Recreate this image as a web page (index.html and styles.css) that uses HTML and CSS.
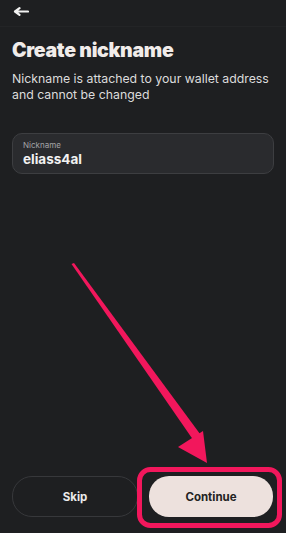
FILE: index.html
```html
<!DOCTYPE html>
<html lang="en">
<head>
    <meta charset="UTF-8">
    <meta name="viewport" content="width=device-width, initial-scale=1.0">
    <title>Create nickname</title>
    <link rel="stylesheet" href="styles.css">
</head>
<body>
    <div class="screen">
        <div class="topbar">
            <button class="back" aria-label="Back">
                <svg width="16" height="9" viewBox="0 0 16 9">
                    <path d="M15 4.5H4M6.5 1.2L2 4.5l4.5 3.3" fill="none" stroke="#f2f2f2" stroke-width="2.2" stroke-linecap="round" stroke-linejoin="round"/>
                </svg>
            </button>
        </div>

        <div class="content">
            <h1 class="title">Create nickname</h1>
            <p class="subtitle">Nickname is attached to your wallet address and cannot be changed</p>

            <div class="field">
                <label class="field-label" for="nick">Nickname</label>
                <input class="field-input" id="nick" type="text" value="eliass4al">
            </div>
        </div>

        <div class="actions">
            <button class="btn btn-skip">Skip</button>
            <button class="btn btn-continue">Continue</button>
        </div>

        <!-- annotation drawn over the screenshot -->
        <svg class="overlay" width="286" height="533" viewBox="0 0 286 533">
            <path d="M71.5 264 L74 263 L203 438 L196 444 Z" fill="#f2175c"/>
            <path d="M178 447 L203 431 L207 463 Z" fill="#f2175c"/>
            <rect x="139.5" y="469.5" width="140" height="56" rx="11" fill="none" stroke="#f2175c" stroke-width="5"/>
        </svg>
    </div>
</body>
</html>
```

FILE: styles.css
```css
* {
    box-sizing: border-box;
}
body {
    margin: 0;
    background-color: #1e1f21;
    color: #ededed;
    font-family: Inter, 'Noto Sans', sans-serif;
}
.screen {
    position: relative;
    width: 286px;
    height: 533px;
    display: flex;
    flex-direction: column;
    overflow: hidden;
}
.topbar {
    height: 27px;
    display: flex;
    align-items: center;
    padding: 0 13px;
    border-bottom: 1px solid #232426;
}
.back {
    background: none;
    border: none;
    padding: 0;
    display: flex;
    margin-top: -4px;
}
.content {
    padding: 0 12px;
}
.title {
    margin: 10px 0 0;
    font-size: 19.5px;
    font-weight: 900;
    letter-spacing: -0.3px;
    color: #f1ecea;
    line-height: 26px;
}
.subtitle {
    margin: 8px 0 0;
    font-size: 12.3px;
    line-height: 16px;
    color: #dcdcdc;
}
.field {
    margin-top: 30px;
    height: 41px;
    border: 1px solid #3d3e41;
    border-radius: 10px;
    background-color: #2a2b2e;
    padding: 6px 10px 0;
    display: flex;
    flex-direction: column;
}
.field-label {
    font-size: 8px;
    line-height: 10px;
    color: #a4a4a6;
}
.field-input {
    background: none;
    border: none;
    padding: 0;
    margin-top: 1px;
    font-family: inherit;
    font-size: 13.5px;
    font-weight: 700;
    color: #f2f2f2;
    outline: none;
}
.actions {
    margin-top: auto;
    display: flex;
    gap: 11px;
    padding: 0 13px 16px 12px;
}
.btn {
    flex: 1;
    height: 41px;
    border-radius: 20px;
    font-family: Inter, 'Noto Sans', sans-serif;
    font-size: 11.5px;
    font-weight: 700;
}
.btn-skip {
    background: none;
    border: 1px solid #37383b;
    color: #ececec;
}
.btn-continue {
    background-color: #ede1dd;
    border: none;
    color: #232323;
}
.overlay {
    position: absolute;
    left: 0;
    top: 0;
    pointer-events: none;
}
```
